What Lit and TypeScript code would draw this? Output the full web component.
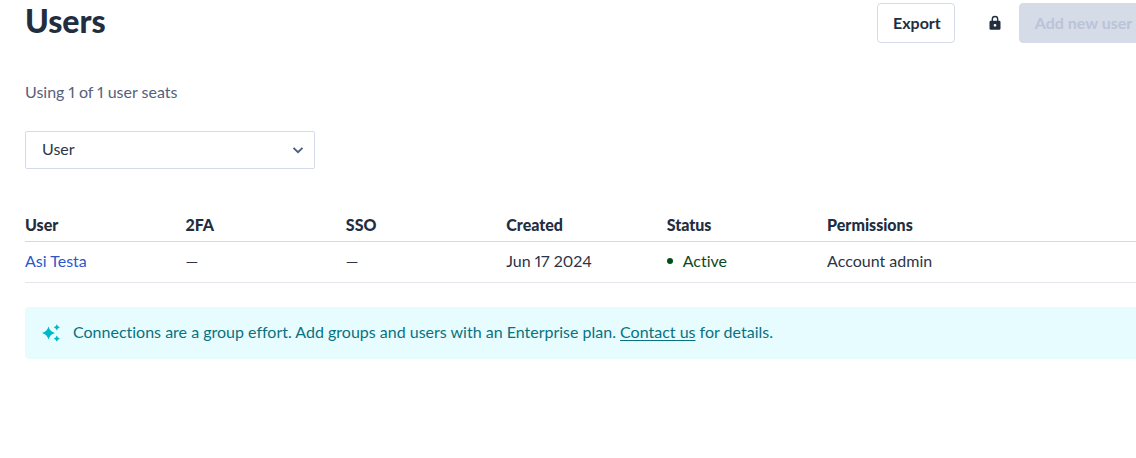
import { LitElement, html, css } from "lit";
import { customElement, state } from "lit/decorators.js";

interface UserRow {
  name: string;
  twoFactor: string;
  sso: string;
  created: string;
  status: string;
  permissions: string;
}

@customElement("app-root")
export class AppRoot extends LitElement {
  static styles = css`
    :host {
      display: block;
      overflow: hidden;
      background: #fff;
      color: #2b3547;
      font-family: Lato, "Open Sans", sans-serif;
      font-size: 16px;
      line-height: 24px;
      font-variant-ligatures: none;
      font-variant-numeric: proportional-nums;
    }
    .page {
      margin-right: -12px;
      padding: 3px 0 24px 25px;
    }
    .header {
      display: flex;
      align-items: flex-start;
      justify-content: space-between;
    }
    .title {
      margin: 0;
      font-size: 32px;
      line-height: 36px;
      font-weight: 900;
      color: #222d3f;
    }
    .actions {
      display: flex;
      align-items: center;
    }
    .button {
      box-sizing: border-box;
      height: 40px;
      padding: 0 15px;
      border: 1px solid #d5dbe8;
      border-radius: 4px;
      background: #fff;
      color: #222d3f;
      font: inherit;
      font-weight: 700;
      white-space: nowrap;
    }
    .export {
      width: 78px;
    }
    .add {
      padding: 0 14px;
      width: 129px;
      background: #d5dbe7;
      color: #bac4d8;
    }
    .lock {
      display: block;
      margin: 0 16px 0 32px;
    }
    .seats {
      margin: 37px 0 27px;
      color: #55617c;
    }
    .picker {
      display: grid;
      align-items: center;
      width: 290px;
    }
    .picker > * {
      grid-area: 1 / 1;
    }
    .select {
      box-sizing: border-box;
      width: 100%;
      height: 38px;
      padding: 0 40px 2px 16px;
      border: 1px solid #d5dbe8;
      border-radius: 2px;
      appearance: none;
      background: #fff;
      color: inherit;
      font: inherit;
    }
    .chevron {
      justify-self: end;
      margin-right: 11px;
      pointer-events: none;
    }
    .table {
      width: 100%;
      margin: 40px 0 24px;
      table-layout: fixed;
      border-collapse: collapse;
      text-align: left;
    }
    .table th {
      padding: 4px 0;
      border-bottom: 1px solid #d2d9e7;
      font-weight: 900;
      color: #222d3f;
    }
    .table td {
      padding: 7px 0 9px;
      border-bottom: 1px solid #e3e6ef;
    }
    .link {
      color: #2c58cc;
      text-decoration: none;
    }
    .status {
      display: flex;
      align-items: center;
      gap: 10px;
      color: #0b4a20;
    }
    .dot {
      width: 6px;
      height: 6px;
      border-radius: 50%;
      background: #004d1a;
    }
    .notice {
      display: flex;
      align-items: center;
      gap: 12px;
      padding: 0 16px;
      border-radius: 4px;
      background: #e7fcff;
      color: #08727f;
    }
    .notice p {
      margin: 0;
      padding: 13px 0 15px;
    }
    .notice a {
      color: inherit;
      text-underline-offset: 2px;
    }
    .sparkles {
      flex: none;
    }
  `;

  @state() private users: UserRow[] = [
    {
      name: "Asi Testa",
      twoFactor: "—",
      sso: "—",
      created: "Jun 17 2024",
      status: "Active",
      permissions: "Account admin",
    },
  ];

  render() {
    return html`
      <main class="page">
        <header class="header">
          <h1 class="title">Users</h1>
          <div class="actions">
            <button class="button export" type="button">Export</button>
            <svg class="lock" width="16" height="16" viewBox="0 0 16 16" aria-hidden="true">
              <path d="M5.3 6.5V4.2a2.7 2.7 0 0 1 5.4 0v2.3" fill="none" stroke="#222d3f" stroke-width="1.4" />
              <path fill="#222d3f" fill-rule="evenodd" d="M3.8 5.8h8.4q1.3 0 1.3 1.3v6.4q0 1.3-1.3 1.3H3.8q-1.3 0-1.3-1.3V7.1q0-1.3 1.3-1.3zM8 8.900a1.4 1.4 0 1 0 0 2.8a1.4 1.4 0 1 0 0-2.8z" />
            </svg>
            <button class="button add" type="button" disabled>Add new user</button>
          </div>
        </header>

        <p class="seats">Using 1 of 1 user seats</p>

        <div class="picker">
          <select class="select" aria-label="Filter by">
            <option>User</option>
          </select>
          <svg class="chevron" width="12" height="12" viewBox="0 0 12 12" aria-hidden="true">
            <path d="M1.5 3.8L6 8.2l4.5-4.4" fill="none" stroke="#4d5c7c" stroke-width="1.8" />
          </svg>
        </div>

        <table class="table">
          <thead>
            <tr>
              <th scope="col">User</th>
              <th scope="col">2FA</th>
              <th scope="col">SSO</th>
              <th scope="col">Created</th>
              <th scope="col">Status</th>
              <th scope="col">Permissions</th>
              <th scope="col"></th>
            </tr>
          </thead>
          <tbody>
            ${this.users.map(
              (user) => html`
                <tr>
                  <td><a class="link" href="#">${user.name}</a></td>
                  <td>${user.twoFactor}</td>
                  <td>${user.sso}</td>
                  <td>${user.created}</td>
                  <td><span class="status"><span class="dot"></span>${user.status}</span></td>
                  <td>${user.permissions}</td>
                  <td></td>
                </tr>
              `
            )}
          </tbody>
        </table>

        <aside class="notice">
          <svg class="sparkles" width="20" height="20" viewBox="0 0 20 20" aria-hidden="true">
            <g fill="#00b8cc">
              <path d="M7.5 3.5Q8.900 8.600 14 10Q8.900 11.400 7.5 16.5Q6.100 11.400 1 10Q6.100 8.600 7.5 3.5z" />
              <path d="M15.8 1.2Q16.5 3.6 18.9 4.3Q16.5 5 15.8 7.4Q15.1 5 12.7 4.3Q15.1 3.6 15.8 1.2z" />
              <path d="M15.8 12.6Q16.5 15 18.9 15.7Q16.5 16.4 15.8 18.8Q15.1 16.4 12.7 15.7Q15.1 15 15.8 12.6z" />
            </g>
            <path d="M7.5 6L11 10L7.5 14L4 10z" fill="#00b8cc" />
          </svg>
          <p>
            Connections are a group effort. Add groups and users with an Enterprise plan.
            <a href="#">Contact us</a> for details.
          </p>
        </aside>
      </main>
    `;
  }
}
